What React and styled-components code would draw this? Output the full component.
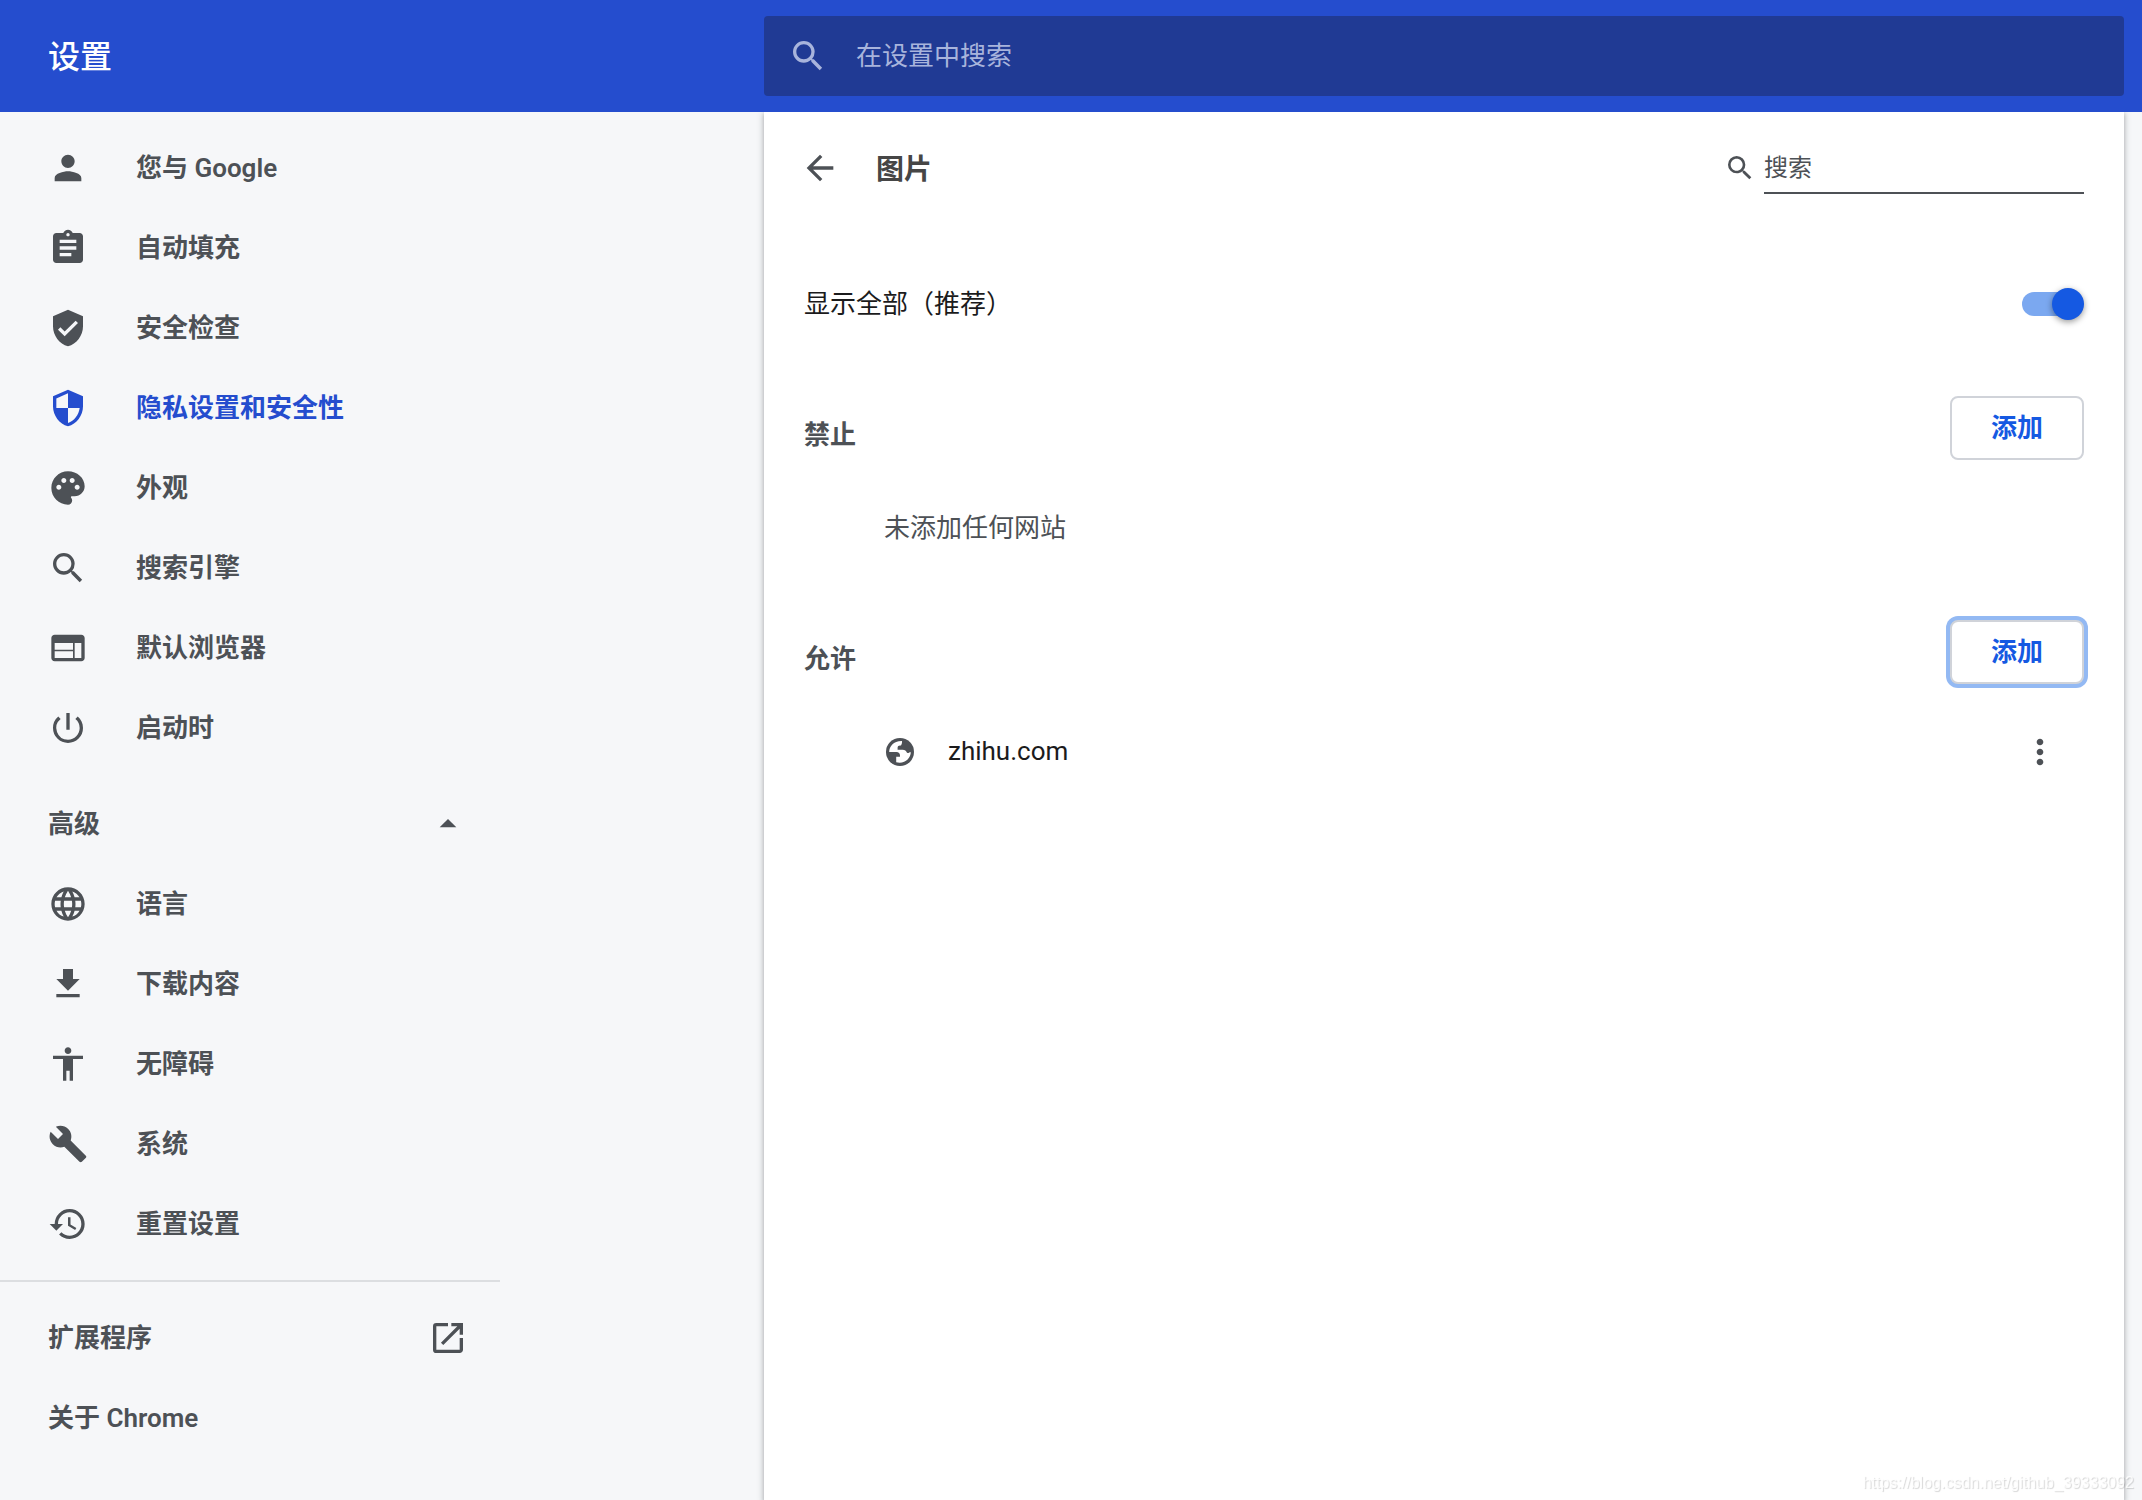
import { useState } from "react";
import styled, { createGlobalStyle, css } from "styled-components";
import {
  MdAccessibility,
  MdArrowBack,
  MdArrowDropUp,
  MdAssignment,
  MdBuild,
  MdFileDownload,
  MdHistory,
  MdLanguage,
  MdMoreVert,
  MdOpenInNew,
  MdPalette,
  MdPerson,
  MdPowerSettingsNew,
  MdSearch,
  MdVerifiedUser,
  MdWeb,
} from "react-icons/md";

const basicItems = [
  { label: "您与 Google", icon: MdPerson },
  { label: "自动填充", icon: MdAssignment },
  { label: "安全检查", icon: MdVerifiedUser },
  { label: "隐私设置和安全性", icon: ShieldIcon, active: true },
  { label: "外观", icon: MdPalette },
  { label: "搜索引擎", icon: MdSearch },
  { label: "默认浏览器", icon: MdWeb },
  { label: "启动时", icon: MdPowerSettingsNew },
];

const advancedItems = [
  { label: "语言", icon: MdLanguage },
  { label: "下载内容", icon: MdFileDownload },
  { label: "无障碍", icon: MdAccessibility },
  { label: "系统", icon: MdBuild },
  { label: "重置设置", icon: MdHistory },
];

export default function App() {
  const [showAll, setShowAll] = useState(true);

  return (
    <>
      <GlobalStyle />
      <Header>
        <HeaderTitle>设置</HeaderTitle>
        <HeaderSearch>
          <MdSearch size={40} />
          <HeaderInput
            type="search"
            aria-label="在设置中搜索"
            placeholder="在设置中搜索"
          />
        </HeaderSearch>
      </Header>
      <Page>
        <Sidebar>
          <NavList items={basicItems} />
          <AdvancedButton type="button" aria-expanded="true">
            <Label>高级</Label>
            <MdArrowDropUp size={40} />
          </AdvancedButton>
          <NavList items={advancedItems} />
          <Divider />
          <FooterLink href="#extensions">
            <Label>扩展程序</Label>
            <MdOpenInNew size={40} />
          </FooterLink>
          <FooterLink href="#about">
            <Label>关于 Chrome</Label>
          </FooterLink>
        </Sidebar>
        <Card>
          <CardHeader>
            <IconButton type="button" aria-label="返回">
              <MdArrowBack size={40} />
            </IconButton>
            <CardTitle>图片</CardTitle>
            <CardSearch>
              <MdSearch size={32} />
              <CardInput type="search" aria-label="搜索" placeholder="搜索" />
            </CardSearch>
          </CardHeader>
          <ToggleRow>
            <Label as="label" htmlFor="show-all">
              显示全部（推荐）
            </Label>
            <Toggle
              type="checkbox"
              id="show-all"
              checked={showAll}
              onChange={(event) => setShowAll(event.target.checked)}
            />
          </ToggleRow>
          <SiteSection title="禁止">
            <EmptyText>未添加任何网站</EmptyText>
          </SiteSection>
          <SiteSection title="允许" focused>
            <SiteRow>
              <GlobeIcon />
              <SiteName>zhihu.com</SiteName>
              <IconButton type="button" aria-label="更多操作">
                <MdMoreVert size={40} />
              </IconButton>
            </SiteRow>
          </SiteSection>
        </Card>
      </Page>
      <Watermark>https://blog.csdn.net/github_39333092</Watermark>
    </>
  );
}

function NavList({ items }) {
  return (
    <nav>
      {items.map(({ label, icon: Icon, active }) => (
        <NavLink key={label} href="#" $active={active}>
          <Icon size={40} />
          <Label>{label}</Label>
        </NavLink>
      ))}
    </nav>
  );
}

function SiteSection({ title, focused, children }) {
  return (
    <Section>
      <SectionHeader>
        <SectionTitle>{title}</SectionTitle>
        <AddButton type="button" $focused={focused}>
          添加
        </AddButton>
      </SectionHeader>
      {children}
    </Section>
  );
}

function ShieldIcon({ size }) {
  return (
    <svg width={size} height={size} viewBox="0 0 24 24" fill="currentColor">
      <path d="M12 1L3 5v6c0 5.550 3.840 10.740 9 12 5.160-1.260 9-6.450 9-12V5l-9-4zm0 10.990h7c-.530 4.120-3.280 7.790-7 8.940V12H5V6.300l7-3.110v8.800z" />
    </svg>
  );
}

function GlobeIcon() {
  return (
    <svg width="32" height="32" viewBox="0 0 32 32" aria-hidden="true">
      <circle cx="16" cy="16" r="14" fill="#4d5156" />
      <path
        fill="#fff"
        d="M18 5C9.500 4.800 5.200 10.500 5.200 16H12.500C14.600 16 16 17.400 16 19.500V20.800H12.200V26.300C20.500 28.500 27 22.500 26.800 15.800C26 17 24.500 17.200 23 16.800C22.200 14.800 20.800 13.800 18.600 13.800H13.600V11.800C13.600 10.200 14.600 9.500 16 9.500H17C17.800 8 18.200 6.800 18 5Z"
      />
    </svg>
  );
}

const GlobalStyle = createGlobalStyle`
  * {
    box-sizing: border-box;
  }

  html,
  body,
  #root {
    height: 100%;
  }

  body {
    margin: 0;
    background: #f6f7f9;
    color: #1b1b1c;
    font-family: Roboto, "Noto Sans CJK SC", sans-serif;
    font-size: 26px;
  }

  #root {
    display: flex;
    flex-direction: column;
  }

  button,
  input {
    font: inherit;
  }

  svg {
    flex-shrink: 0;
  }
`;

const columns = css`
  display: grid;
  grid-template-columns: 764px 1fr;
  padding-right: 18px;
`;

const Header = styled.header`
  ${columns}
  align-items: center;
  height: 112px;
  flex-shrink: 0;
  background: #254dce;
`;

const HeaderTitle = styled.h1`
  margin: 0;
  padding: 0 0 4px 48px;
  color: #fff;
  font-size: 32px;
  font-weight: 500;
`;

const HeaderSearch = styled.div`
  display: flex;
  align-items: center;
  gap: 28px;
  height: 80px;
  padding: 0 24px;
  border-radius: 4px;
  background: #203a94;
  color: #a8b4dc;
`;

const HeaderInput = styled.input`
  flex: 1;
  min-width: 0;
  padding: 0;
  border: 0;
  outline: 0;
  background: none;
  color: #fff;

  &::placeholder {
    color: #a8b4dc;
  }
`;

const Page = styled.div`
  ${columns}
  flex: 1;
`;

const Label = styled.span`
  padding-bottom: 6px;
`;

const Sidebar = styled.aside`
  width: 500px;
  padding: 16px 0;
  color: #4d5156;
  font-weight: 600;
`;

const NavLink = styled.a`
  display: flex;
  align-items: center;
  gap: 48px;
  height: 80px;
  padding-left: 48px;
  color: ${({ $active }) => ($active ? "#254dce" : "inherit")};
  text-decoration: none;
`;

const AdvancedButton = styled.button`
  display: flex;
  align-items: center;
  justify-content: space-between;
  width: 100%;
  height: 80px;
  margin-top: 16px;
  padding: 0 32px 0 48px;
  border: 0;
  background: none;
  color: inherit;
`;

const Divider = styled.hr`
  height: 2px;
  margin: 16px 0;
  border: 0;
  background: #dcdee1;
`;

const FooterLink = styled.a`
  display: flex;
  align-items: center;
  justify-content: space-between;
  height: 80px;
  padding: 0 32px 0 48px;
  color: inherit;
  text-decoration: none;
`;

const Card = styled.main`
  padding: 0 40px;
  background: #fff;
  box-shadow: 0 2px 4px rgba(60, 64, 67, 0.3), 0 2px 6px 2px rgba(60, 64, 67, 0.15);
  clip-path: inset(0 -12px);
`;

const CardHeader = styled.div`
  display: flex;
  align-items: center;
  height: 112px;
  margin-left: -4px;
`;

const IconButton = styled.button`
  display: flex;
  padding: 0;
  border: 0;
  background: none;
  color: #4d5156;
`;

const CardTitle = styled.h2`
  flex: 1;
  margin: 0;
  padding: 0 0 2px 36px;
  color: #464646;
  font-size: 28px;
  font-weight: 600;
`;

const CardSearch = styled.div`
  display: flex;
  align-items: center;
  gap: 8px;
  color: #4d5156;
`;

const CardInput = styled.input`
  width: 320px;
  height: 52px;
  padding: 2px 0 0;
  border: 0;
  border-bottom: 2px solid #4d5156;
  outline: 0;
  background: none;
  font-size: 24px;

  &::placeholder {
    color: #4d5156;
  }
`;

const ToggleRow = styled.div`
  display: flex;
  align-items: center;
  justify-content: space-between;
  height: 80px;
  margin: 40px 0;
`;

const Toggle = styled.input`
  appearance: none;
  position: relative;
  display: flex;
  align-items: center;
  width: 62px;
  height: 32px;
  margin: 0;

  &::before {
    content: "";
    width: 56px;
    height: 24px;
    border-radius: 12px;
    background: ${({ checked }) => (checked ? "#7ba8f0" : "#bdc1c6")};
  }

  &::after {
    content: "";
    position: absolute;
    left: ${({ checked }) => (checked ? "30px" : "0")};
    width: 32px;
    height: 32px;
    border-radius: 50%;
    background: ${({ checked }) => (checked ? "#1559e2" : "#fff")};
    box-shadow: 0 2px 6px rgba(0, 0, 0, 0.4);
  }
`;

const Section = styled.section`
  height: 224px;
`;

const SectionHeader = styled.div`
  display: flex;
  align-items: flex-start;
  justify-content: space-between;
  height: 96px;
  padding-top: 12px;
`;

const SectionTitle = styled.h3`
  margin: 0;
  padding-top: 12px;
  color: #4d5156;
  font-size: 26px;
  font-weight: 600;
  line-height: 54px;
`;

const AddButton = styled.button`
  height: 64px;
  padding: 0 39px 6px;
  border: 2px solid #d0d3d9;
  border-radius: 8px;
  background: #fff;
  color: #1559e2;
  font-weight: 600;
  ${({ $focused }) => $focused && "box-shadow: 0 0 0 4px #93b9f3;"}
`;

const EmptyText = styled.p`
  margin: 0;
  padding-left: 80px;
  color: #4d5156;
  line-height: 96px;
`;

const SiteRow = styled.div`
  display: flex;
  align-items: center;
  height: 96px;
  padding: 0 24px 0 80px;
`;

const SiteName = styled.span`
  flex: 1;
  padding: 0 0 2px 32px;
`;

const Watermark = styled.div`
  position: fixed;
  right: 8px;
  bottom: 8px;
  color: rgba(255, 255, 255, 0.8);
  font-family: "Liberation Sans", sans-serif;
  font-size: 16px;
  text-shadow: 1px 1px 1px rgba(0, 0, 0, 0.16);
`;
